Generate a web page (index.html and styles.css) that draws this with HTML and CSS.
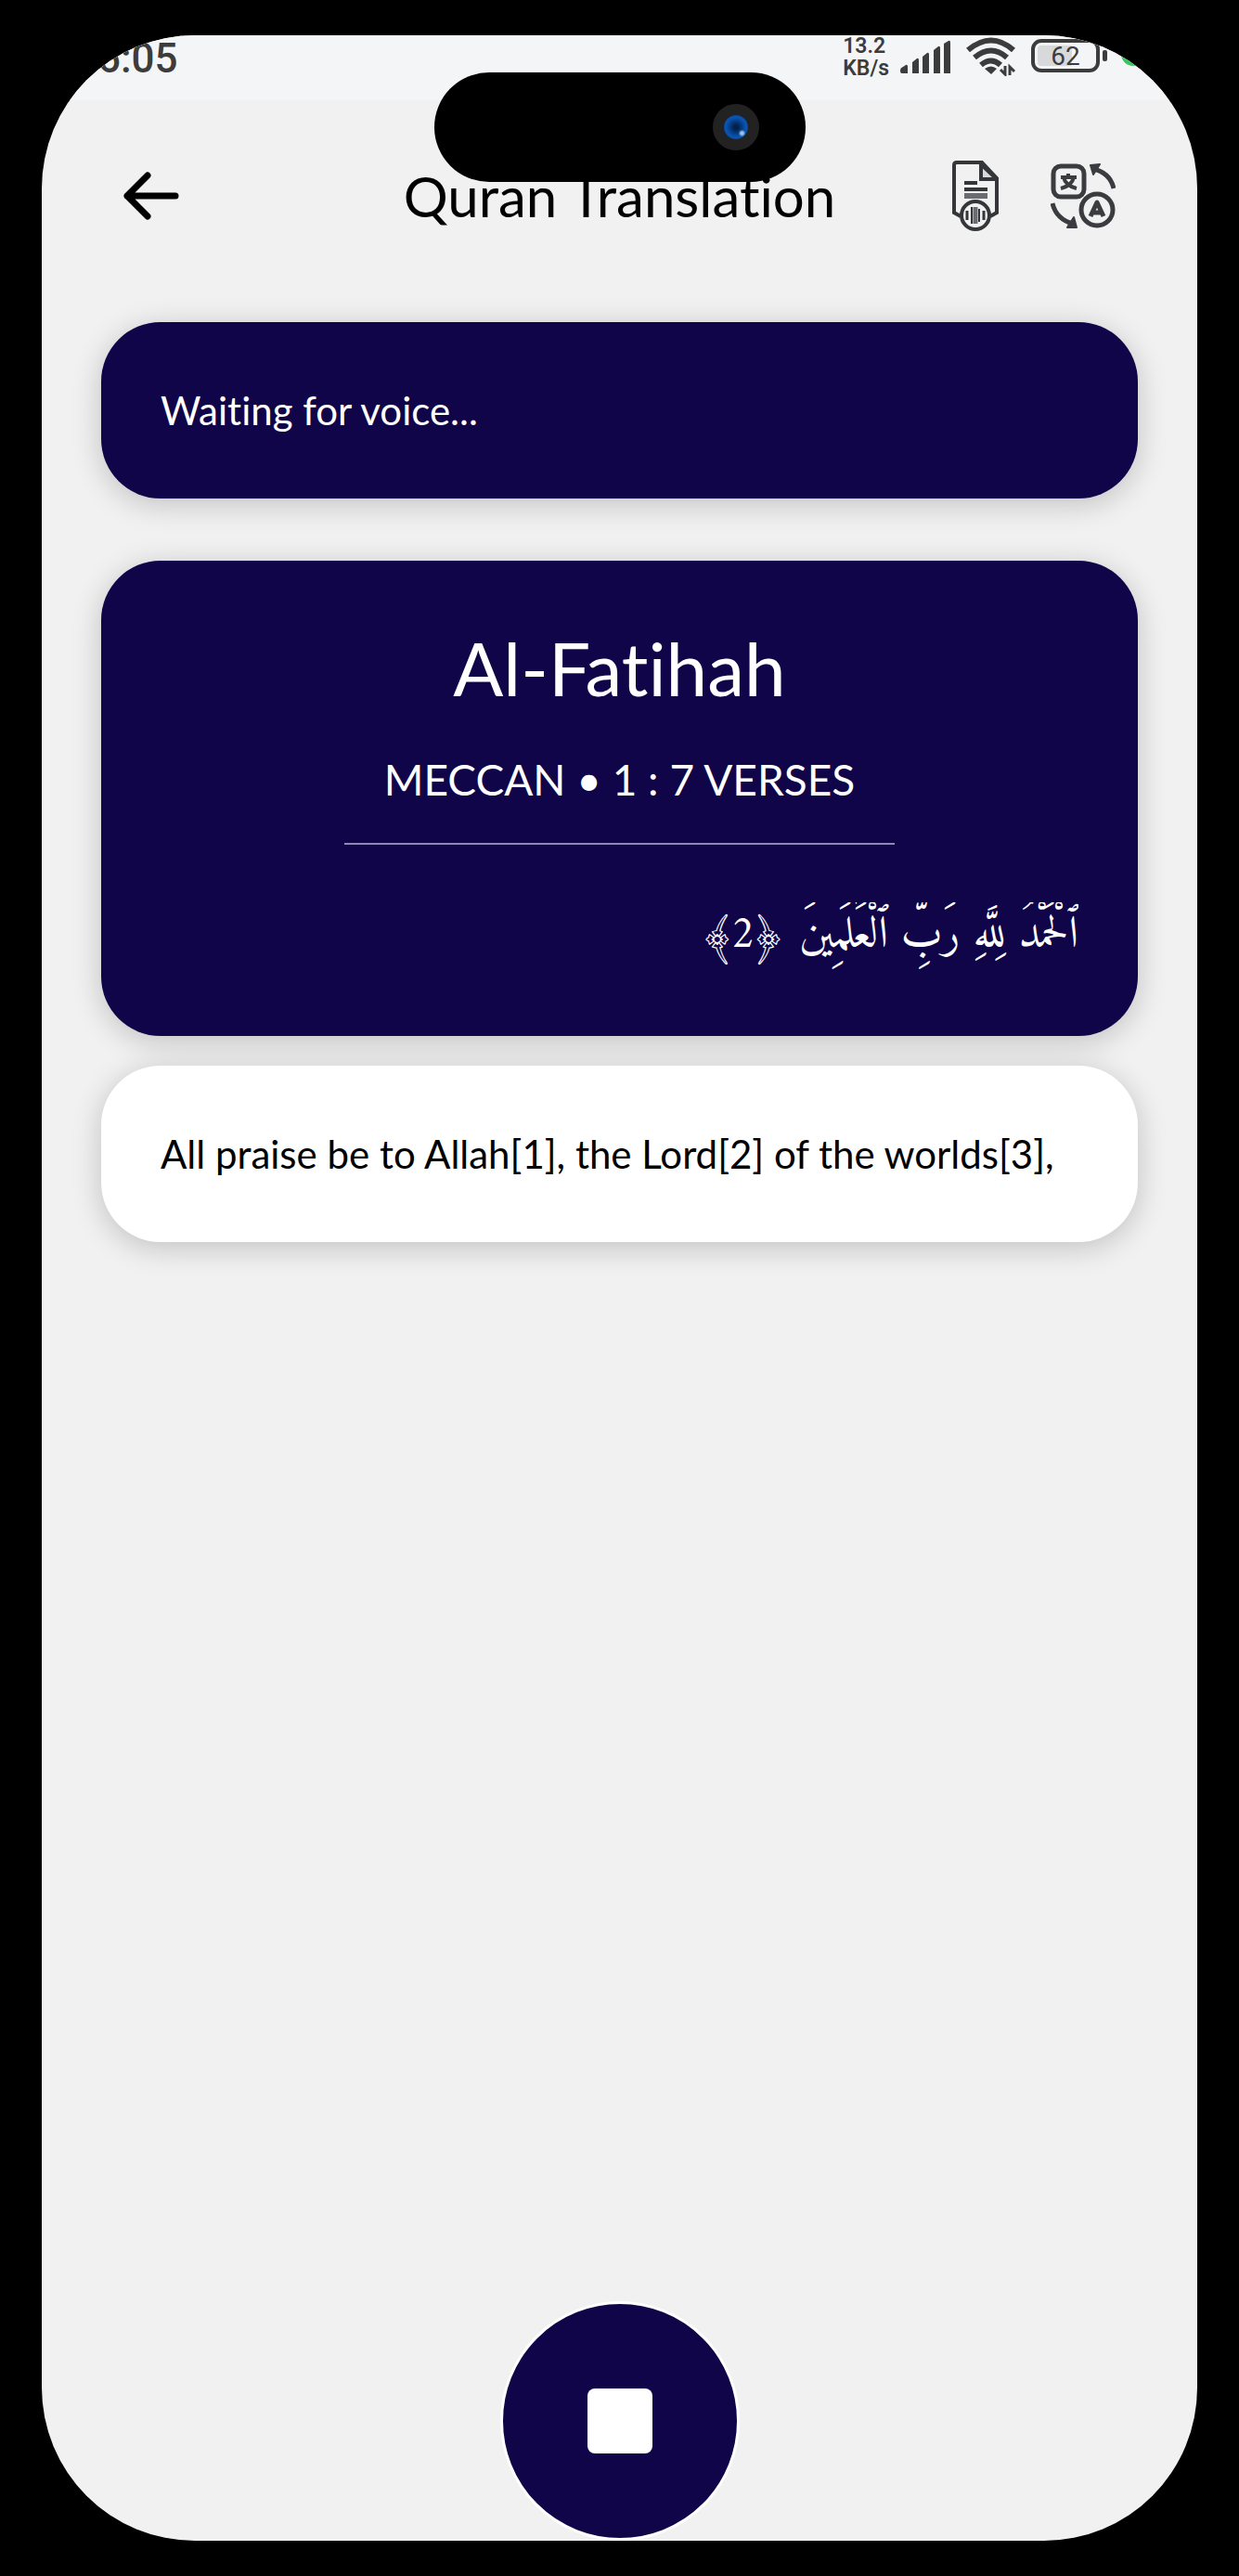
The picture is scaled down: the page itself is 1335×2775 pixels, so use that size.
FILE: index.html
```html
<!DOCTYPE html>
<html lang="en">
<head>
<meta charset="utf-8">
<meta name="viewport" content="width=device-width, initial-scale=1">
<title>Quran Translation</title>
<link rel="stylesheet" href="styles.css">
</head>
<body>
<div class="screen">
  <div class="status-bar">
    <span class="clock">6:05</span>
    <div class="status-icons">
      <span class="net-speed">13.2<br>KB/s</span>
      <svg class="signal" width="55" height="36" viewBox="0 0 55 36" fill="#3c3c3c" aria-hidden="true">
        <path d="M0 33 Q0 30 3 29 L6 27 Q8 26 8 29 V36 H2 Q0 36 0 34Z"/>
        <path d="M13 24 L18 20 Q20 19 20 22 V36 H13Z"/>
        <path d="M24 18 L29 14 Q31 13 31 16 V36 H24Z"/>
        <path d="M36 11 L41 7 Q43 6 43 9 V36 H36Z"/>
        <path d="M47 4 L52 1 Q54 0 54 3 V36 H47Z"/>
      </svg>
      <svg class="wifi" width="54" height="42" viewBox="0 0 54 42" aria-hidden="true">
        <g fill="none" stroke="#3c3c3c" stroke-width="6">
          <path d="M2 14 Q27 -7 51 14"/>
          <path d="M9 22 Q27 7 44 22"/>
          <path d="M16 30 Q27 21 37 30"/>
        </g>
        <path d="M27 40 L20 34 Q27 29 33 34Z" fill="#3c3c3c"/>
        <path d="M42 31 V40 L37 35 M47 41 V32 L52 37" fill="none" stroke="#3c3c3c" stroke-width="3"/>
      </svg>
      <span class="battery"><span class="battery-level">62</span></span>
      <span class="charge-dot"></span>
    </div>
  </div>

  <header class="top-bar">
    <button class="icon-button back" type="button" aria-label="Back">
      <svg width="60" height="52" viewBox="0 0 60 52" fill="none" stroke="#000" stroke-width="7" stroke-linecap="round" stroke-linejoin="round" aria-hidden="true">
        <path d="M56 26 H4 M26 4 L4 26 L26 48"/>
      </svg>
    </button>
    <h1 class="title">Quran Translation</h1>
    <div class="actions">
      <button class="icon-button" type="button" aria-label="Transcript">
        <svg width="50" height="76" viewBox="0 0 50 76" fill="none" stroke="#34363a" stroke-width="4" aria-hidden="true">
          <path d="M9 60 L2 56 V5 Q2 2 5 2 H32 L48 19 V56 L41 60"/>
          <path d="M31 2 V20 H48 L31 4" fill="#d9dadb"/>
          <path d="M13 24 H27 M13 31 H38"/>
          <path d="M13 38 H38" stroke-width="6" stroke="#6a6c70"/>
          <circle cx="25" cy="59" r="15"/>
          <path d="M16 54 V64 M34 54 V64" stroke-width="3"/>
          <path d="M21 50 V68 M29 52 V66" stroke-width="2"/>
          <path d="M25 50 V68" stroke-width="5" stroke="#6a6c70"/>
        </svg>
      </button>
      <button class="icon-button" type="button" aria-label="Switch language">
        <svg width="70" height="70" viewBox="0 0 70 70" fill="none" stroke="#3a3c40" stroke-width="5" stroke-linejoin="round" aria-hidden="true">
          <rect x="3" y="3" width="33" height="33" rx="8"/>
          <path d="M11 15 H28 M19 11 V15 M14 15 Q16 24 28 27 M25 15 Q23 24 11 27" stroke-width="4"/>
          <circle cx="50" cy="50" r="17"/>
          <path d="M43 57 L50 42 L57 57 M46 53 H54"/>
          <path d="M46 6 Q64 10 68 27"/>
          <path d="M43 2 L53 1 L46 12Z" fill="#3a3c40" stroke-width="2"/>
          <path d="M2 43 Q6 60 24 65"/>
          <path d="M28 69 L18 69 L25 58Z" fill="#3a3c40" stroke-width="2"/>
        </svg>
      </button>
    </div>
  </header>

  <main class="content">
    <section class="card card-dark voice">
      <p class="body-text">Waiting for voice...</p>
    </section>
    <section class="card card-dark surah">
      <h2 class="surah-name">Al-Fatihah</h2>
      <p class="surah-meta">MECCAN • 1 : 7 VERSES</p>
      <hr class="divider">
      <p class="verse" lang="ar" dir="rtl">ٱلْحَمْدُ لِلَّهِ رَبِّ ٱلْعَٰلَمِينَ ﴿2﴾</p>
    </section>
    <section class="card card-light">
      <p class="body-text">All praise be to Allah[1], the Lord[2] of the worlds[3],</p>
    </section>
  </main>

  <button class="stop" type="button" aria-label="Stop recording"><span class="stop-square"></span></button>
  <div class="island"><span class="camera"></span></div>
</div>
</body>
</html>
```
FILE: styles.css
```css
* {
  box-sizing: border-box;
}

body {
  margin: 0;
  min-height: 100vh;
  padding: 38px 45px;
  display: flex;
  background: #000;
  color: #000;
  font-family: Lato, "Open Sans", sans-serif;
  font-variant-ligatures: no-common-ligatures;
}

h1, h2, p {
  margin: 0;
  font-weight: 400;
}

button {
  border: 0;
  padding: 0;
  background: none;
}

svg {
  display: block;
}

.screen {
  position: relative;
  flex: 1;
  min-width: 0;
  display: flex;
  flex-direction: column;
  overflow: hidden;
  border-radius: 165px;
  background: #f1f1f1;
}

/* Status bar */
.status-bar {
  height: 70px;
  padding: 0 56px 0 60px;
  display: flex;
  justify-content: space-between;
  align-items: flex-start;
  background: #f4f5f7;
  color: #3c3c3c;
  font-family: Roboto, sans-serif;
}

.clock {
  font-size: 44px;
  line-height: 50px;
  font-weight: 500;
}

.status-icons {
  display: flex;
  align-items: flex-start;
  gap: 12px;
}

.net-speed {
  font-size: 23px;
  line-height: 24px;
  font-weight: 600;
}

.signal {
  margin-top: 5px;
}

.wifi {
  margin: 2px 4px 0;
}

.battery {
  position: relative;
  width: 74px;
  height: 36px;
  margin: 4px 11px 0 0;
  padding: 3px;
  border: 4px solid #3c3c3c;
  border-radius: 11px;
}

.battery::after {
  content: "";
  position: absolute;
  right: -12px;
  top: 8px;
  width: 5px;
  height: 12px;
  border-radius: 2px;
  background: #3c3c3c;
}

.battery-level {
  display: block;
  height: 22px;
  border-radius: 4px;
  background: linear-gradient(90deg, #d8d9da 62%, transparent 62%);
  font-size: 28px;
  line-height: 24px;
  text-align: center;
}

.charge-dot {
  width: 26px;
  height: 26px;
  margin-top: 7px;
  border-radius: 50%;
  background: #35c759;
}

/* Header */
.top-bar {
  display: grid;
  grid-template-columns: 1fr auto 1fr;
  align-items: center;
  padding: 64px 88px 97px;
}

.back {
  justify-self: start;
}

.title {
  font-size: 60px;
  line-height: 78px;
}

.actions {
  justify-self: end;
  display: flex;
  align-items: center;
  gap: 56px;
}

/* Cards */
.content {
  padding: 0 64px;
  display: flex;
  flex-direction: column;
  gap: 32px;
}

.card {
  border-radius: 64px;
  padding: 64px;
  box-shadow: 0 6px 32px rgba(0, 0, 0, 0.2);
}

.card-dark {
  background: #0f0548;
  color: #fff;
}

.card-light {
  background: #fff;
}

.voice {
  margin-bottom: 35px;
}

.body-text {
  font-size: 42px;
  line-height: 62px;
}

.surah {
  text-align: center;
}

.surah-name {
  font-size: 80px;
  line-height: 102px;
}

.surah-meta {
  margin-top: 38px;
  font-size: 46px;
  line-height: 64px;
}

.divider {
  width: 60%;
  height: 2px;
  margin: 36px auto 62px;
  border: 0;
  background: #8f88b5;
}

/* The highest vowel marks are trimmed by the top of the line */
.verse {
  padding-bottom: 8px;
  overflow: hidden;
  font-family: Amiri, "Noto Naskh Arabic", "Noto Sans Arabic", "DejaVu Sans", serif;
  font-size: 48px;
  line-height: 72px;
  text-align: start;
}

/* Recording control */
.stop {
  width: 258px;
  height: 258px;
  margin: auto auto 0;
  display: grid;
  place-items: center;
  border: 3px solid #fff;
  border-radius: 50%;
  background: #0f0548;
}

.stop-square {
  width: 70px;
  height: 70px;
  border-radius: 8px;
  background: #fff;
}

/* Camera cut-out, over the top of the page */
.island {
  position: absolute;
  top: 40px;
  left: 50%;
  width: 400px;
  height: 118px;
  padding-right: 50px;
  display: flex;
  justify-content: flex-end;
  align-items: center;
  transform: translateX(-50%);
  border-radius: 59px;
  background: #000;
}

.camera {
  width: 50px;
  height: 50px;
  border: 12px solid #222;
  border-radius: 50%;
  background: radial-gradient(circle at 75% 75%, #9cc4e8 0 5%, transparent 14%), radial-gradient(circle, #032048 10%, #0a56b8 60%, #06204a 100%);
}
```
